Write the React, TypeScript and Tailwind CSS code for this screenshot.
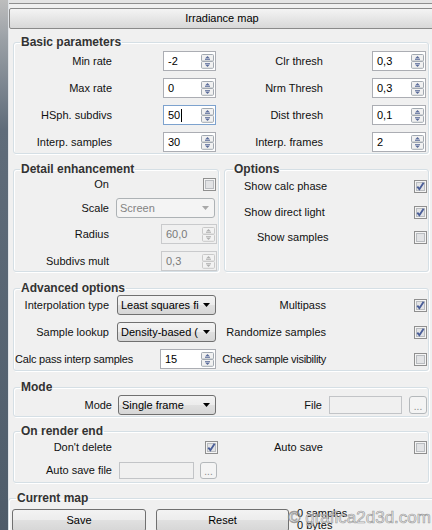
import React from 'react';

function SpinArrows({ disabled }: { disabled?: boolean }) {
  const stroke = disabled ? '#c9c9c9' : '#a2a9b1';
  const fill = disabled ? '#b0b0b0' : '#5a6c9a';
  const bg = disabled ? '#f2f2f2' : '#f1f1f1';
  return (
    <svg width="13" height="15" viewBox="0 0 13 15" className="shrink-0">
      <rect x="0.5" y="0.5" width="12" height="6.6" rx="1" fill={bg} stroke={stroke} />
      <rect x="0.5" y="7.5" width="12" height="6.8" rx="1" fill={bg} stroke={stroke} />
      <path d="M4 4.5 L6.5 2 L9 4.5 Z" fill={fill} />
      <rect x="4" y="5" width="5" height="1" fill={fill} opacity="0.8" />
      <rect x="4" y="9" width="5" height="1" fill={fill} opacity="0.8" />
      <path d="M4 10.5 L6.5 13 L9 10.5 Z" fill={fill} />
    </svg>
  );
}

function Spinner({ value, w, disabled, focus }: { value: string; w: string; disabled?: boolean; focus?: boolean }) {
  return (
    <div
      className={`h-[20px] ${w} shrink-0 flex items-center border pl-[4px] pr-[1px] ${
        disabled
          ? 'border-[#c9cacc] bg-[#f0f0f0] text-[#7a7a7a]'
          : focus
          ? 'border-[#7da2ce] bg-white text-black'
          : 'border-[#abadb3] bg-white text-black'
      }`}
    >
      <span className="flex-1 flex items-center">
        {value}
        {focus && <span className="inline-block w-[1px] h-[13px] bg-black ml-[1px]" />}
      </span>
      <SpinArrows disabled={disabled} />
    </div>
  );
}

function Check({ checked }: { checked?: boolean }) {
  return (
    <svg width="13" height="13" viewBox="0 0 13 13" className="shrink-0">
      <rect x="0.5" y="0.5" width="12" height="12" fill="#f4f4f4" stroke="#8f8f8f" />
      <rect x="2.5" y="2.5" width="8" height="8" fill="#e2e3e5" stroke="#b9bcc0" />
      {checked && (
        <path d="M3.3 6.6 L5.4 9.2 L9.6 2.8" fill="none" stroke="#4a5e98" strokeWidth="1.9" />
      )}
    </svg>
  );
}

function Combo({ text, w, disabled }: { text: string; w: string; disabled?: boolean }) {
  return (
    <div
      className={`h-[20px] ${w} shrink-0 flex items-center rounded-[3px] border pl-[3px] pr-[5px] ${
        disabled
          ? 'border-[#adb2b5] bg-[#f4f4f4] text-[#838383]'
          : 'border-[#707070] bg-[linear-gradient(#f3f3f3,#ececec_50%,#e0e0e0_50%,#d6d6d6)] text-black'
      }`}
    >
      <span className="flex-1 min-w-0 whitespace-nowrap">{text}</span>
      <svg width="7" height="4" viewBox="0 0 7 4" className="shrink-0 ml-[2px]">
        <path d="M0 0 H7 L3.5 4 Z" fill={disabled ? '#a8a8a8' : '#000'} />
      </svg>
    </div>
  );
}

function Dots({ w, h }: { w: string; h: string }) {
  return (
    <div
      className={`${w} ${h} shrink-0 rounded-[3px] border border-[#b4b8bb] bg-[#f4f4f4] text-[#8a8a8a] flex items-end justify-center pb-[1px] text-[10px] leading-[10px]`}
    >
      ...
    </div>
  );
}

function Label({ w, children, extra = '' }: { w: string; children: React.ReactNode; extra?: string }) {
  return <div className={`${w} shrink-0 flex justify-end whitespace-nowrap ${extra}`}>{children}</div>;
}

function Legend({ children, ml = 'ml-[6px]' }: { children: React.ReactNode; ml?: string }) {
  return (
    <legend className={`${ml} px-[1px] font-bold text-[12px] leading-[14px] text-[#333333]`}>{children}</legend>
  );
}

const groupCls = 'border border-[#d5dfe5] rounded-[3px] shadow-[inset_1px_1px_0_#ffffff,1px_1px_0_#ffffff]';

export default function App() {
  const basic = [
    ['Min rate', '-2', 'Clr thresh', '0,3'],
    ['Max rate', '0', 'Nrm Thresh', '0,3'],
    ['HSph. subdivs', '50', 'Dist thresh', '0,1'],
    ['Interp. samples', '30', 'Interp. frames', '2'],
  ];
  return (
    <div className="relative w-[432px] h-[530px] overflow-hidden flex bg-[#f0f0f0] font-['Liberation_Sans',Arial,sans-serif] text-[11px] leading-[13px] text-[#111]">
      {/* left dark strip */}
      <div className="w-[9px] shrink-0 border-r border-[#dfe3e7] bg-[linear-gradient(to_bottom,#bdbdbd,#9aa0a6_40px,#5f6c7a_130px,#4e5c6a)]" />

      <div className="flex-1 min-w-0 flex flex-col">
        {/* top strip */}
        <div className="h-[4px] w-[426px] shrink-0 border-b border-[#8e8e8e] bg-[#e4e4e4]" />

        {/* rollout header */}
        <div className="mt-[4px] h-[21px] w-[426px] shrink-0 flex items-center justify-center rounded-[2px] border border-[#8a8a8a] bg-[linear-gradient(#f4f4f4,#e6e6e6_50%,#d8d8d8)] text-black">
          Irradiance map
        </div>

        {/* Basic parameters */}
        <fieldset className={`mt-[6px] ml-[4px] w-[416px] shrink-0 ${groupCls}`}>
          <Legend>Basic parameters</Legend>
          <div className="flex flex-col gap-[7px] pt-[2px] pb-[1px]">
            {basic.map((r, i) => (
              <div key={i} className="flex items-center h-[20px]">
                <Label w="w-[98px]">{r[0]}</Label>
                <div className="ml-[51px]">
                  <Spinner value={r[1]} w="w-[53px]" focus={i === 2} />
                </div>
                <Label w="w-[107px]">{r[2]}</Label>
                <div className="ml-[49px]">
                  <Spinner value={r[3]} w="w-[54px]" />
                </div>
              </div>
            ))}
          </div>
        </fieldset>

        {/* Detail + Options */}
        <div className="mt-[8px] ml-[4px] flex gap-[5px] items-stretch shrink-0">
          <fieldset className={`w-[206px] ${groupCls}`}>
            <Legend>Detail enhancement</Legend>
            <div className="flex flex-col pr-[1px]">
              <div className="mt-[2px] h-[13px] flex items-center">
                <Label w="w-[95px]">On</Label>
                <div className="ml-auto mr-[1px]">
                  <Check />
                </div>
              </div>
              <div className="mt-[7px] h-[20px] flex items-center">
                <Label w="w-[95px]">Scale</Label>
                <div className="ml-[7px]">
                  <Combo text="Screen" w="w-[99px]" disabled />
                </div>
              </div>
              <div className="mt-[6px] h-[20px] flex items-center">
                <Label w="w-[95px]">Radius</Label>
                <div className="ml-auto">
                  <Spinner value="60,0" w="w-[56px]" disabled />
                </div>
              </div>
              <div className="mt-[7px] h-[20px] flex items-center">
                <Label w="w-[95px]">Subdivs mult</Label>
                <div className="ml-auto">
                  <Spinner value="0,3" w="w-[56px]" disabled />
                </div>
              </div>
            </div>
          </fieldset>
          <fieldset className={`w-[205px] ${groupCls}`}>
            <Legend ml="ml-[8px]">Options</Legend>
            <div className="flex flex-col pr-[1px]">
              <div className="mt-[4px] h-[13px] flex items-center">
                <span className="pl-[19px] whitespace-nowrap">Show calc phase</span>
                <div className="ml-auto">
                  <Check checked />
                </div>
              </div>
              <div className="mt-[13px] h-[13px] flex items-center">
                <span className="pl-[19px] whitespace-nowrap">Show direct light</span>
                <div className="ml-auto">
                  <Check checked />
                </div>
              </div>
              <div className="mt-[12px] h-[13px] flex items-center">
                <span className="pl-[32px] whitespace-nowrap">Show samples</span>
                <div className="ml-auto">
                  <Check />
                </div>
              </div>
            </div>
          </fieldset>
        </div>

        {/* Advanced options */}
        <fieldset className={`mt-[9px] ml-[4px] w-[416px] shrink-0 ${groupCls}`}>
          <Legend>Advanced options</Legend>
          <div className="flex flex-col gap-[7px] pb-[1px] pr-[1px]">
            <div className="h-[20px] flex items-center">
              <Label w="w-[95px]">Interpolation type</Label>
              <div className="ml-[8px]">
                <Combo text="Least squares fi" w="w-[99px]" />
              </div>
              <Label w="w-[110px]">Multipass</Label>
              <div className="ml-auto">
                <Check checked />
              </div>
            </div>
            <div className="h-[20px] flex items-center">
              <Label w="w-[95px]">Sample lookup</Label>
              <div className="ml-[8px]">
                <Combo text="Density-based (" w="w-[99px]" />
              </div>
              <Label w="w-[110px]">Randomize samples</Label>
              <div className="ml-auto">
                <Check checked />
              </div>
            </div>
            <div className="h-[20px] flex items-center">
              <div className="w-[146px] shrink-0 pl-[1px] whitespace-nowrap tracking-[-0.2px]">Calc pass interp samples</div>
              <Spinner value="15" w="w-[56px]" />
              <Label w="w-[110px]" extra="tracking-[-0.3px]">Check sample visibility</Label>
              <div className="ml-auto">
                <Check />
              </div>
            </div>
          </div>
        </fieldset>

        {/* Mode */}
        <fieldset className={`mt-[9px] ml-[4px] w-[416px] shrink-0 ${groupCls}`}>
          <Legend>Mode</Legend>
          <div className="mt-[1px] mb-[1px] h-[20px] flex items-center pr-[1px]">
            <Label w="w-[98px]">Mode</Label>
            <div className="ml-[6px]">
              <Combo text="Single frame" w="w-[98px]" />
            </div>
            <Label w="w-[106px]">File</Label>
            <div className="ml-[7px] w-[73px] h-[18px] shrink-0 border border-[#c2c4c7] bg-[#f0f0f0]" />
            <div className="ml-auto">
              <Dots w="w-[18px]" h="h-[18px]" />
            </div>
          </div>
        </fieldset>

        {/* On render end */}
        <fieldset className={`mt-[7px] ml-[4px] w-[416px] shrink-0 ${groupCls}`}>
          <Legend>On render end</Legend>
          <div className="flex flex-col pb-[3px] pr-[1px]">
            <div className="mt-[3px] h-[13px] flex items-center">
              <Label w="w-[98px]">Don't delete</Label>
              <div className="ml-[93px]">
                <Check checked />
              </div>
              <span className="ml-[56px] whitespace-nowrap">Auto save</span>
              <div className="ml-auto">
                <Check />
              </div>
            </div>
            <div className="mt-[8px] h-[17px] flex items-center">
              <Label w="w-[98px]">Auto save file</Label>
              <div className="ml-[7px] w-[75px] h-[17px] shrink-0 border border-[#c2c4c7] bg-[#f0f0f0]" />
              <div className="ml-[6px]">
                <Dots w="w-[17px]" h="h-[17px]" />
              </div>
            </div>
          </div>
        </fieldset>

        {/* Current map */}
        <fieldset className={`mt-[8px] ml-[-1px] w-[430px] shrink-0 ${groupCls}`}>
          <Legend ml="ml-[7px]">Current map</Legend>
          <div className="mt-[4px] flex items-start">
            <div className="ml-[3px] w-[134px] h-[23px] shrink-0 flex items-center justify-center rounded-[3px] border border-[#707070] bg-[linear-gradient(#f3f3f3,#ececec_50%,#e0e0e0_50%,#d6d6d6)] text-black">
              Save
            </div>
            <div className="ml-[10px] w-[133px] h-[23px] shrink-0 flex items-center justify-center rounded-[3px] border border-[#707070] bg-[linear-gradient(#f3f3f3,#ececec_50%,#e0e0e0_50%,#d6d6d6)] text-black">
              Reset
            </div>
            <div className="ml-[8px] -mt-[2px] flex flex-col leading-[12px] whitespace-nowrap">
              <span>0 samples</span>
              <span>0 bytes</span>
            </div>
          </div>
        </fieldset>
      </div>

      {/* watermark */}
      <div className="absolute left-[288px] top-[508px] text-[17px] leading-[20px] whitespace-nowrap text-[rgba(240,240,240,0.75)] [-webkit-text-stroke:0.7px_rgba(120,120,120,0.7)]">
        © grafica2d3d.com
      </div>
    </div>
  );
}
